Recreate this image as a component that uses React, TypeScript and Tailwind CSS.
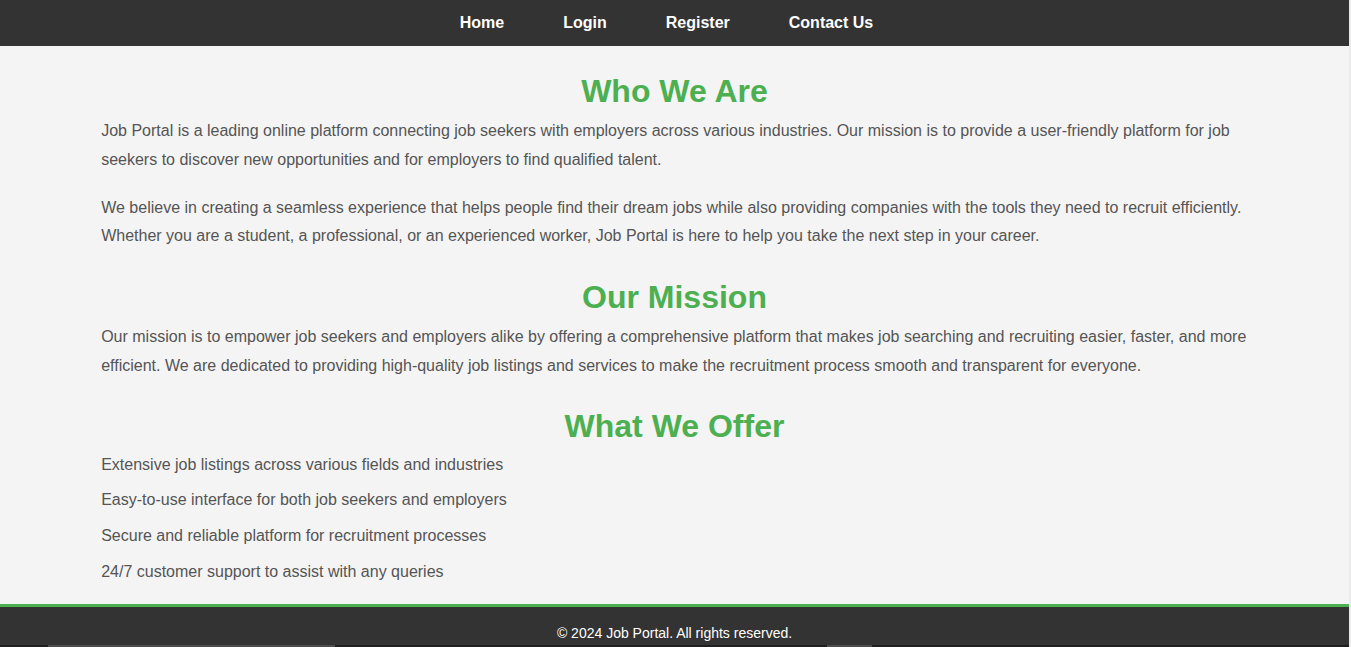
const navLinks = ['Home', 'Login', 'Register', 'Contact Us'];

const offers = [
  'Extensive job listings across various fields and industries',
  'Easy-to-use interface for both job seekers and employers',
  'Secure and reliable platform for recruitment processes',
  '24/7 customer support to assist with any queries',
];

const Heading = ({ children, tight }: { children: string; tight?: boolean }) => (
  <h2
    className={`${tight ? 'mt-[27px]' : 'mt-[28px]'} mb-[7px] text-center text-[32px] font-bold leading-[37px] text-[#4caf50]`}
  >
    {children}
  </h2>
);

const Para = ({ children }: { children: string }) => (
  <p className="mb-[19px] text-[16px] leading-[28.8px] text-[#555]">{children}</p>
);

const App = () => (
  <div className="flex min-h-screen bg-[#f4f4f4] font-['Liberation_Sans',Arial,sans-serif]">
    <div className="flex flex-1 flex-col">
      <nav className="flex h-[46px] items-center justify-center gap-[59px] bg-[#333] pr-[16px]">
        {navLinks.map((link) => (
          <a key={link} href="#" className="text-[16px] font-bold text-white">
            {link}
          </a>
        ))}
      </nav>

      <main className="mx-auto flow-root w-[85%] pb-[10px]">
        <Heading tight>Who We Are</Heading>
        <Para>
          Job Portal is a leading online platform connecting job seekers with employers across various industries. Our mission is to provide a user-friendly platform for job seekers to discover new opportunities and for employers to find qualified talent.
        </Para>
        <Para>
          We believe in creating a seamless experience that helps people find their dream jobs while also providing companies with the tools they need to recruit efficiently. Whether you are a student, a professional, or an experienced worker, Job Portal is here to help you take the next step in your career.
        </Para>

        <Heading>Our Mission</Heading>
        <Para>
          Our mission is to empower job seekers and employers alike by offering a comprehensive platform that makes job searching and recruiting easier, faster, and more efficient. We are dedicated to providing high-quality job listings and services to make the recruitment process smooth and transparent for everyone.
        </Para>

        <Heading tight>What We Offer</Heading>
        <ul>
          {offers.map((item) => (
            <li key={item} className="mb-[10px] text-[16px] leading-[25.6px] text-[#555]">
              {item}
            </li>
          ))}
        </ul>
      </main>

      <footer className="h-[41px] border-t-[3px] border-[#4caf50] bg-[#333] pt-[15px] text-center text-[14px] leading-[22.4px] text-white">
        © 2024 Job Portal. All rights reserved.
      </footer>
      <div className="flex h-[2px] bg-[#1f1f1f]">
        <div className="w-[48px]" />
        <div className="w-[287px] bg-[#4d4d4d]" />
        <div className="w-[492px]" />
        <div className="w-[45px] bg-[#4d4d4d]" />
      </div>
    </div>
    <div className="w-[2px] bg-[#ebebeb]" />
  </div>
);

export default App;
